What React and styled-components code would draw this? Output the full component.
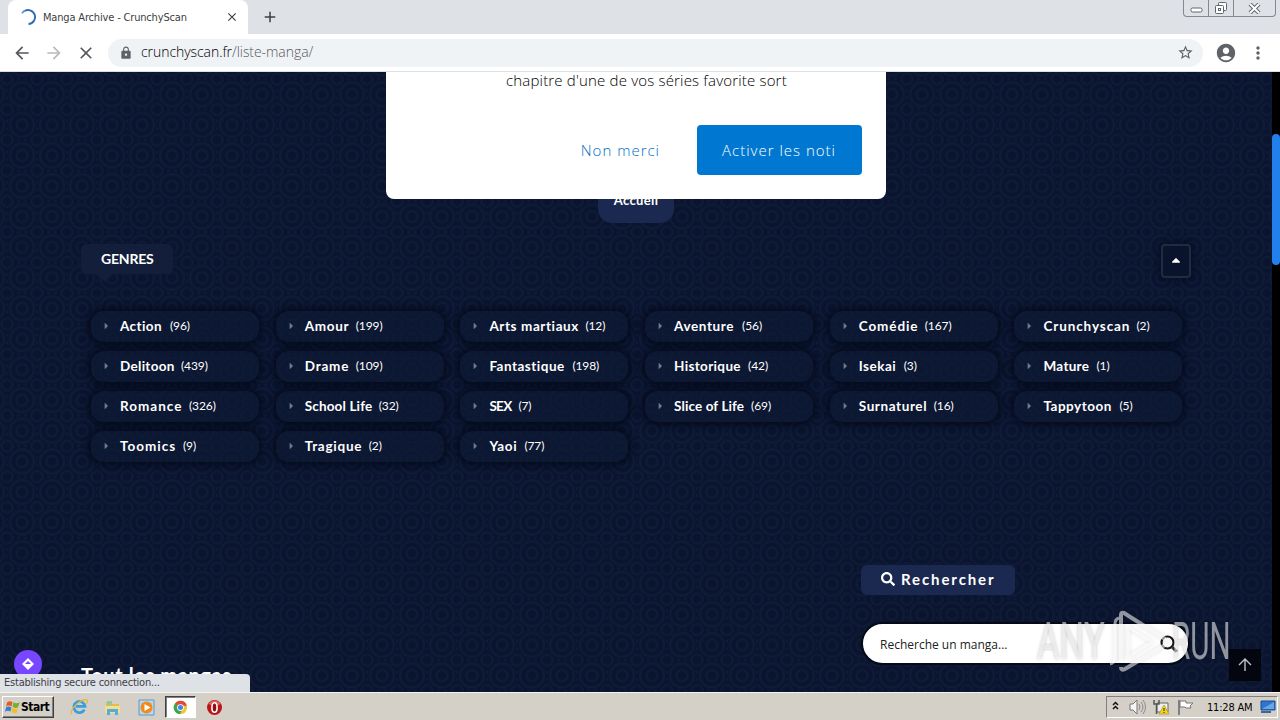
import React from "react";
import styled, { createGlobalStyle, css } from "styled-components";
import { MdArrowBack, MdArrowForward, MdClose, MdAdd, MdLock, MdStarBorder, MdAccountCircle, MdMoreVert } from "react-icons/md";
import { FaSearch, FaCaretRight, FaCaretUp } from "react-icons/fa";

const tahoma = css`font-family: "DejaVu Sans Condensed", "DejaVu Sans", sans-serif; font-stretch: condensed;`;
const openSans = css`font-family: "Open Sans", "Noto Sans", sans-serif;`;
const rounded = css`font-family: "Lato", "Open Sans", sans-serif;`;

const GlobalStyle = createGlobalStyle`
  * { box-sizing: border-box; }
  body { margin: 0; overflow: hidden; background: #0a142c; }
  svg { display: block; flex: none; }
`;

const Screen = styled.div`
  width: 1280px;
  height: 720px;
  display: flex;
  flex-direction: column;
  overflow: hidden;
  position: relative;
`;

/* Browser chrome */
const TabStrip = styled.header`
  height: 34px;
  flex: none;
  display: flex;
  align-items: flex-start;
  background: #dee1e6;
  padding-left: 8px;
`;
const Tab = styled.div`
  width: 240px;
  height: 34px;
  display: flex;
  align-items: center;
  background: #fff;
  border-radius: 8px 8px 0 0;
  padding: 0 9px 0 12px;
  color: #3c4043;
`;
const TabTitle = styled.span`
  ${tahoma}
  font-size: 11px;
  letter-spacing: -0.17px;
  margin-left: 7px;
  flex: 1;
  white-space: nowrap;
`;
const NewTab = styled.div`
  margin: 8px 0 0 13px;
  color: #3c4043;
`;
const WindowButtons = styled.div`
  display: flex;
  height: 17px;
  margin: 0 4px 0 auto;
  border: 1px solid #85888e;
  border-top: 0;
  border-radius: 0 0 4px 4px;
`;
const WindowButton = styled.div`
  width: ${(p) => p.$w}px;
  display: flex;
  justify-content: center;
  align-items: center;
  & + & { border-left: 1px solid #85888e; }
`;
const Toolbar = styled.div`
  height: 38px;
  flex: none;
  display: flex;
  align-items: center;
  background: #fff;
  border-bottom: 1px solid #dcdfe3;
  padding: 0 10px 0 12px;
  color: #5f6368;
`;
const NavIcon = styled.div`
  width: 20px;
  margin-right: 12px;
  color: ${(p) => (p.$off ? "#b8babd" : "#55585d")};
`;
const AddressBar = styled.div`
  flex: none;
  width: 1095px;
  height: 28px;
  border-radius: 14px;
  background: #f0f3f5;
  display: flex;
  align-items: center;
  padding: 0 9px 0 11px;
`;
const Url = styled.span`
  ${openSans}
  font-size: 14px;
  font-weight: 300;
  color: #000;
  margin: -2px 0 0 8px;
  flex: 1;
  letter-spacing: -0.06px;
  span { color: #55595e; }
`;
const ProfileIcon = styled(MdAccountCircle)`
  margin-left: 12px;
`;
const MenuIcon = styled(MdMoreVert)`
  margin-left: 11px;
`;

/* Page */
const Viewport = styled.div`
  height: 620px;
  flex: none;
  display: flex;
  position: relative;
  overflow: hidden;
`;
const navy = "#0a142e";
const line = "#101c38";
const rings = `radial-gradient(circle at 50% 50%, ${navy} 3.5px, ${line} 5.5px, ${navy} 7.5px, ${navy} 9.5px, ${line} 12px, ${navy} 14px, transparent 14.5px)`;
const Page = styled.main`
  width: 1272px;
  flex: none;
  background-color: ${navy};
  background-image: ${rings}, ${rings};
  background-size: 30px 30.6px;
  background-position: 7px 7px, 22px 22.3px;
  padding: 111px 80px 0 81px;
  color: #fff;
  ${rounded}
`;
const ScrollTrack = styled.div`
  width: 8px;
  background: #000;
  padding-top: 62px;
`;
const ScrollThumb = styled.div`
  height: 131px;
  border-radius: 4px;
  background: #2280ec;
`;
const Breadcrumb = styled.div`
  width: 76px;
  height: 40px;
  margin-left: 517px;
  border-radius: 14px;
  background: #1b2850;
  font-size: 13px;
  font-weight: 700;
  line-height: 35px;
  letter-spacing: 0.35px;
  text-align: center;
`;
const SectionHead = styled.div`
  display: flex;
  justify-content: space-between;
  height: 34px;
  margin-top: 21px;
`;
const Tag = styled.div`
  height: 30px;
  width: ${(p) => p.$w}px;
  display: flex;
  align-items: center;
  gap: 6px;
  padding: 0 0 2px 20px;
  border-radius: 6px;
  background: ${(p) => p.$bg};
  font-size: ${(p) => p.$fs || 14}px;
  font-weight: 700;
  letter-spacing: ${(p) => p.$ls || 0}px;
  white-space: nowrap;
  position: relative;
  &::after {
    content: "";
    position: absolute;
    left: 16px;
    top: 30px;
    border: 8px solid transparent;
    border-bottom: 0;
    border-top-color: ${(p) => p.$tip};
  }
`;
const Collapse = styled.div`
  width: 30px;
  height: 34px;
  margin-right: 1px;
  border: 2px solid #202a40;
  border-radius: 4px;
  box-shadow: 0 0 6px 2px rgba(4, 9, 24, 0.55);
  background: #0a132c;
  display: flex;
  justify-content: center;
  padding-top: 7px;
`;
const GenreGrid = styled.div`
  display: grid;
  grid-template-columns: repeat(6, 168px);
  column-gap: 16.7px;
  row-gap: 9px;
  margin: 33px 0 0 10px;
`;
const Genre = styled.div`
  height: 31px;
  border-radius: 13px;
  background: rgba(14, 25, 53, 0.55);
  box-shadow: 0 0 6px 3px rgba(3, 8, 23, 0.75);
  display: flex;
  align-items: center;
  padding: 0 0 1px 13px;
  white-space: nowrap;
  svg { color: #70788a; width: 5px; }
`;
const GenreName = styled.span`
  flex: none;
  width: ${(p) => p.$w}px;
  margin-left: 11px;
  font-size: 13.5px;
  line-height: 16px;
  font-weight: 700;
  letter-spacing: ${(p) => p.$ls}px;
`;
const GenreCount = styled.span`
  font-size: 12px;
  line-height: 16px;
  letter-spacing: -0.1px;
`;
const SearchArea = styled.div`
  margin: 103px 0 0 780px;
`;
const SearchBox = styled.div`
  width: 329px;
  height: 43px;
  margin: 27px 0 0 0;
  border: 2px solid #050a18;
  border-radius: 22px;
  background: #fff;
  color: #222;
  ${openSans}
  font-size: 12px;
  display: flex;
  align-items: center;
  justify-content: space-between;
  padding: 1px 10px 0 17px;
`;
const PageTitle = styled.h2`
  margin: -2px 0 0;
  font-size: 20px;
  line-height: 24px;
  font-weight: 700;
  letter-spacing: 0.6px;
  white-space: nowrap;
`;
const Popup = styled.div`
  position: absolute;
  left: 386px;
  top: 0;
  width: 500px;
  height: 127px;
  background: #fff;
  border-radius: 0 0 8px 8px;
  padding: 0 24px;
  ${openSans}
  font-weight: 300;
  color: #000;
`;
const PopupText = styled.p`
  margin: 0 0 0 96px;
  font-size: 15px;
  line-height: 16px;
  letter-spacing: 0.18px;
  white-space: nowrap;
`;
const PopupActions = styled.div`
  display: flex;
  justify-content: flex-end;
  margin-top: 37px;
  font-size: 15px;
  line-height: 50px;
  letter-spacing: 1px;
`;
const Decline = styled.span`
  color: #0070c4;
  margin-right: 37px;
`;
const Accept = styled.span`
  width: 165px;
  height: 50px;
  border-radius: 4px;
  background: #0078d1;
  color: #fff;
  padding-left: 25px;
`;
const Bell = styled.div`
  position: absolute;
  left: 14px;
  top: 578px;
  width: 28px;
  height: 28px;
  border-radius: 50%;
  background: #7846ff;
  padding: 7px;
`;
const StatusBubble = styled.div`
  position: absolute;
  left: 0;
  top: 602px;
  width: 250px;
  height: 18px;
  padding-left: 4px;
  border-radius: 0 4px 0 0;
  background: #dee1e6;
  color: #3f4246;
  ${tahoma}
  font-size: 11px;
  letter-spacing: -0.22px;
  line-height: 18px;
  white-space: nowrap;
`;
const BackToTop = styled.div`
  position: absolute;
  left: 1229px;
  top: 577px;
  width: 32px;
  height: 32px;
  background: #03060f;
  padding: 9px 8px;
`;

/* Watermark over the page */
const Watermark = styled.div`
  position: absolute;
  left: 1037px;
  top: 538px;
  height: 64px;
  display: flex;
  color: rgba(255, 255, 255, 0.55);
  font: 400 51px/64px Roboto, sans-serif;
  svg { filter: drop-shadow(0 0 2px rgba(0, 0, 0, 0.22)); }
`;
const MarkWord = styled.span`
  width: ${(p) => p.$w}px;
  transform: scaleX(${(p) => p.$sx});
  transform-origin: 0 50%;
  text-shadow: 0 0 4px rgba(0, 0, 0, 0.25);
`;

/* Taskbar */
const Taskbar = styled.footer`
  height: 28px;
  flex: none;
  display: flex;
  align-items: center;
  background: #d4d0c8;
  border-top: 1px solid #f5f4f0;
  padding: 2px 2px 1px;
  ${tahoma}
  font-size: 11px;
  color: #000;
`;
const StartButton = styled.div`
  width: 52px;
  height: 22px;
  display: flex;
  align-items: center;
  padding-left: 2px;
  font-size: 12px;
  font-weight: 700;
  letter-spacing: -0.5px;
  border: 1px solid;
  border-color: #fff #404040 #404040 #fff;
  box-shadow: inset -1px -1px #808080;
`;
const TaskItem = styled.div`
  width: ${(p) => p.$w}px;
  height: 22px;
  display: flex;
  align-items: center;
  justify-content: center;
  margin-left: ${(p) => p.$ml || 0}px;
  ${(p) => p.$active && css`
    background: #fff;
    border: 1px solid;
    border-color: #404040 #fff #fff #404040;
    box-shadow: inset 1px 1px #808080;
  `}
`;
const Tray = styled.div`
  width: 172px;
  height: 22px;
  margin-left: auto;
  display: flex;
  align-items: center;
  border: 1px solid;
  border-color: #808080 #fff #fff #808080;
  padding-left: 5px;
`;
const Clock = styled.span`
  width: 46px;
  margin: 0 7px 0 14px;
  white-space: nowrap;
  letter-spacing: -0.2px;
`;

/* name, count, name width, letter spacing */
const genres = [
  ["Action", 96, 43, 0.4], ["Amour", 199, 44, 0.7], ["Arts martiaux", 12, 89, 0.6], ["Aventure", 56, 61, 0.6], ["Comédie", 167, 59, 0.9], ["Crunchyscan", 2, 86, 0.9],
  ["Delitoon", 439, 54, 0.3], ["Drame", 109, 44, 0.8], ["Fantastique", 198, 76, 0.5], ["Historique", 42, 67, 0.35], ["Isekai", 3, 38, 0.5], ["Mature", 1, 46, 0.3],
  ["Romance", 326, 62, 1], ["School Life", 32, 67, 0.15], ["SEX", 7, 22, -0.7], ["Slice of Life", 69, 70, 0.1], ["Surnaturel", 16, 68, 0.6], ["Tappytoon", 5, 69, 0.5],
  ["Toomics", 9, 56, 1], ["Tragique", 2, 57, 0.75], ["Yaoi", 77, 28, 0.7],
];

const Spinner = () => (
  <svg width="16" height="16" viewBox="0 0 16 16"><path d="M4 2.300A7 7 0 1 1 8.500 15" fill="none" stroke="#2f6db5" strokeWidth="1.9" /><path d="M5 1.700A7 7 0 0 0 2 4.300" fill="none" stroke="#6d9bd1" strokeWidth="1.9" /></svg>
);
const Play = () => (
  <svg width="66" height="64" viewBox="0 0 66 64" fill="none" stroke="rgba(255,255,255,.55)" strokeWidth="4" strokeLinejoin="round">
    <path d="M15 52V5q0-3 3-2l41 26q4 3 0 6L19 59q-4 2-4-2" />
    <path d="M4 54q5-1 5-7V14q0-5 4-6M22 47V17l24 15z" strokeWidth="3" />
  </svg>
);
const Magnifier = () => (
  <svg width="18" height="18" viewBox="0 0 18 18" fill="none"><circle cx="7.500" cy="7.500" r="6" stroke="#161616" strokeWidth="2.2" /><path d="m11.800 11.800 5 5" stroke="#333" strokeWidth="3" /></svg>
);
const WindowsLogo = () => (
  <svg width="16" height="16" viewBox="0 0 15 15"><path d="M2 3q3-2 5 0L6 7Q3 5 1 7z" fill="#e75a26" /><path d="M8 3q3 2 6 0l-2 5q-3 1-5-1z" fill="#79ae31" /><path d="M1 8q2-2 5 0l-1 4q-2-2-5 0z" fill="#3480cf" /><path d="M7 8q2 2 5 1l-1 4q-3 1-5-1z" fill="#f5bd22" /></svg>
);
const Explorer = () => (
  <svg width="18" height="18" viewBox="0 0 18 18"><path d="M14.400 11.700A5.600 5.600 0 1 1 15 8.300H6" fill="none" stroke="#36a0df" strokeWidth="2.8" /><path d="M2 16C-2 13 11 0 17 2c1 1 0 3-1 4" fill="none" stroke="#e9b83c" strokeWidth="1.3" /></svg>
);
const Folder = () => (
  <svg width="17" height="17" viewBox="0 0 17 17"><path d="M2 3h5l1 2h7v9H2z" fill="#e3bd4d" /><path d="M3 2h5v4H3z" fill="#91ca9d" /><path d="M1 7h15v7H1z" fill="#f4df8d" /><path d="M3 16v-6h11v6h-3v-3H6v3z" fill="#55add9" /></svg>
);
const MediaPlayer = () => (
  <svg width="17" height="17" viewBox="0 0 17 17"><path d="M1 1h15v15H1z" fill="#b8d8ef" stroke="#5e97c8" /><circle cx="8.500" cy="8.500" r="6" fill="#f18a16" /><path d="M6.500 5v7l6-3.500z" fill="#fff" /></svg>
);
const Chrome = () => (
  <svg width="15" height="15" viewBox="0 0 16 16"><circle cx="8" cy="8" r="7" fill="#f3c52f" /><path d="M8 8 2 4a7 7 0 0 1 12.700 2H8z" fill="#df4937" /><path d="M2 4a7 7 0 0 0 5.500 11L10 10 8 8z" fill="#36a853" /><circle cx="8" cy="8" r="3.600" fill="#fff" /><circle cx="8" cy="8" r="2.700" fill="#4285e8" /></svg>
);
const Opera = () => (
  <svg width="17" height="17" viewBox="0 0 17 17"><circle cx="8.500" cy="8.500" r="7.500" fill="#bd1418" /><path d="M2.500 5a7 7 0 0 1 12 0q-6 3-12 0" fill="#df6260" /><ellipse cx="8.500" cy="8.500" rx="2.6" ry="4.800" fill="#8d1013" stroke="#fff" strokeWidth="1.600" /></svg>
);
const TrayIcons = () => (
  <svg width="81" height="18" viewBox="0 0 81 18" fill="none">
    <path d="m1 7 2.500-2.500L6 7M1 11l2.500-2.500L6 11" stroke="#111" strokeWidth="1.5" />
    <path d="M18 6h3l4-4v14l-4-4h-3z" fill="#f5f5f5" stroke="#777" /><path d="M27 6q2 3 0 6M29 4q4 5 0 10M31 2q5 7 0 14" stroke="#8c8c8c" />
    <path d="M45 5h11v9H45z" fill="#e9eef1" stroke="#666" /><path d="M42 2v4h5V2M44.500 6v10" stroke="#555" strokeWidth="1.5" /><path d="m52 7 5 9H47z" fill="#f3d421" stroke="#b69513" strokeWidth=".7" /><path d="M52 10v3M52 14v1" stroke="#222" />
    <path d="M67 2v15" stroke="#666" strokeWidth="1.5" /><path d="M68 3h6v2h7l-3 3 1 2h-5l-1-1h-5z" fill="#fff" stroke="#777" />
  </svg>
);

export default function App() {
  return (
    <Screen>
      <GlobalStyle />
      <TabStrip>
        <Tab><Spinner /><TabTitle>Manga Archive - CrunchyScan</TabTitle><MdClose size={14} /></Tab>
        <NewTab><MdAdd size={18} /></NewTab>
        <WindowButtons>
          <WindowButton $w={24}><svg width="13" height="10"><rect x="1" y="5" width="11" height="4" rx="1.5" fill="#fff" stroke="#62656a" /></svg></WindowButton>
          <WindowButton $w={25}><svg width="14" height="14" fill="none" stroke="#62656a"><rect x="4.500" y="1.500" width="8" height="8" rx="1" fill="#fff" /><rect x="1.500" y="4.500" width="8" height="8" rx="1" fill="#fff" /><rect x="4.500" y="7.500" width="2" height="2" /></svg></WindowButton>
          <WindowButton $w={42}><svg width="13" height="11"><path d="m2 1 9 9M11 1 2 10" stroke="#62656a" strokeWidth="4" /><path d="m2 1 9 9M11 1 2 10" stroke="#fff" strokeWidth="2" /></svg></WindowButton>
        </WindowButtons>
      </TabStrip>
      <Toolbar>
        <NavIcon><MdArrowBack size={20} /></NavIcon>
        <NavIcon $off><MdArrowForward size={20} /></NavIcon>
        <NavIcon><MdClose size={20} /></NavIcon>
        <AddressBar><MdLock size={14} /><Url>crunchyscan.fr<span>/liste-manga/</span></Url><MdStarBorder size={17} /></AddressBar>
        <ProfileIcon size={22} />
        <MenuIcon size={20} />
      </Toolbar>
      <Viewport>
        <Page>
          <Breadcrumb>Accueil</Breadcrumb>
          <SectionHead>
            <Tag $w={92} $bg="#131e3a" $tip="#131e3a" $ls={-0.2}>GENRES</Tag>
            <Collapse><FaCaretUp size={14} /></Collapse>
          </SectionHead>
          <GenreGrid>
            {genres.map(([name, count, w, ls]) => (
              <Genre key={name}><FaCaretRight size={10} /><GenreName $w={w + 7} $ls={ls}>{name}</GenreName><GenreCount>({count})</GenreCount></Genre>
            ))}
          </GenreGrid>
          <SearchArea>
            <Tag $w={154} $bg="#1b2850" $tip="#0b1631" $fs={15} $ls={1.9}><FaSearch size={14} />Rechercher</Tag>
            <SearchBox>Recherche un manga...<Magnifier /></SearchBox>
          </SearchArea>
          <PageTitle>Tout les mangas</PageTitle>
        </Page>
        <ScrollTrack><ScrollThumb /></ScrollTrack>
        <Popup>
          <PopupText>chapitre d'une de vos séries favorite sort</PopupText>
          <PopupActions><Decline>Non merci</Decline><Accept>Activer les noti</Accept></PopupActions>
        </Popup>
        <Bell><svg width="14" height="14" viewBox="0 0 14 14"><path d="m7 1 6 6-6 6-6-6z" fill="#fff" /><path d="m7 4 3 3H4z" fill="#7846ff" /></svg></Bell>
        <StatusBubble>Establishing secure connection...</StatusBubble>
        <BackToTop><svg width="16" height="14" viewBox="0 0 16 14"><path d="M8 13V1M2 7l6-6 6 6" fill="none" stroke="#c0c2c8" strokeWidth="1.4" /></svg></BackToTop>
        <Watermark><MarkWord $w={69} $sx={0.68}>ANY</MarkWord><Play /><MarkWord $w={60} $sx={0.58}>RUN</MarkWord></Watermark>
      </Viewport>
      <Taskbar>
        <StartButton><WindowsLogo />Start</StartButton>
        <TaskItem $w={18} $ml={16}><Explorer /></TaskItem>
        <TaskItem $w={18} $ml={15}><Folder /></TaskItem>
        <TaskItem $w={18} $ml={16}><MediaPlayer /></TaskItem>
        <TaskItem $w={31} $ml={10} $active><Chrome /></TaskItem>
        <TaskItem $w={18} $ml={9}><Opera /></TaskItem>
        <Tray><TrayIcons /><Clock>11:28 AM</Clock><svg width="16" height="14" viewBox="0 0 16 14"><path d="M1 1h14v9H1z" fill="#2e75cc" stroke="#174d94" /><path d="M2 9 14 2v7z" fill="#66a7e7" /><path d="M1 12h10" stroke="#426591" strokeWidth="2" /></svg></Tray>
      </Taskbar>
    </Screen>
  );
}
